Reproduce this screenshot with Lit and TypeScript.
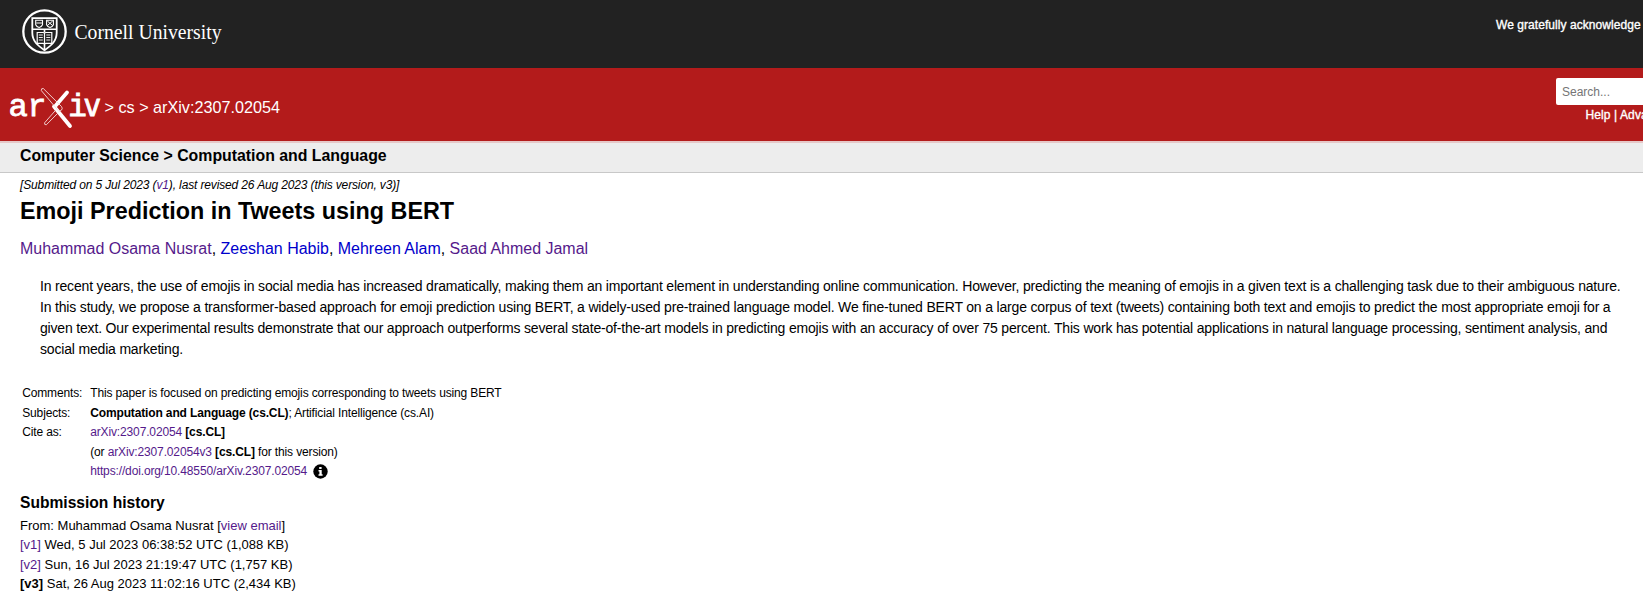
import { LitElement, html, css, svg } from "lit";
import { customElement } from "lit/decorators.js";

const sealMark = svg`
  <g fill="none" stroke="#fff">
    <circle cx="22.5" cy="22.5" r="21.2" stroke-width="2.3"/>
    <path d="M10.3 9.2h24.4v14.6c0 8.5-5.6 12.8-12.2 17.4c-6.6-4.6-12.2-8.9-12.2-17.4z" stroke-width="1.8"/>
    <path d="M10.3 20.3h24.4M22.5 19.5v4M22.5 35v6" stroke-width="1.6"/>
    <path d="M13.7 11.3h6.8v4.5q-1 2.3-3.4 2.7q-2.4-.4-3.4-2.7zM24.6 11.3h6.8v4.5q-1 2.3-3.4 2.7q-2.4-.4-3.4-2.7z" stroke-width="1.1"/>
    <path d="M14.3 14h5.6M25.3 12l5.3 4.5M30.7 12l-5.3 4.5" stroke-width="1"/>
    <path d="M15.2 23.5h6q1.3 0 1.3 1q0-1 1.3-1h6v10.8h-6q-1.3 0-1.3 1q0-1-1.3-1h-6zM22.5 24v11" stroke-width="1.2"/>
    <path d="M16.8 26h4M16.8 28.5h4M16.8 31h4M24.3 26h4M24.3 28.5h4M24.3 31h4" stroke-width=".9"/>
  </g>`;

@customElement("cornell-banner")
class CornellBanner extends LitElement {
  static styles = css`
    :host { display: flex; justify-content: space-between; box-sizing: border-box; height: 68px; padding: 9px 0 0 22px; background: #222; color: #fff; }
    .mark { display: block; }
    .name { font-family: "Liberation Serif", serif; font-size: 21px; }
    .thanks { font-size: 12px; line-height: 14px; padding-top: 9px; width: 147px; white-space: nowrap; letter-spacing: 0.06px; -webkit-text-stroke: 0.35px #fff; }
  `;
  render() {
    return html`
      <svg class="mark" width="230" height="50" viewBox="0 0 230 50">
        ${sealMark}
        <text class="name" x="52.5" y="29.5" fill="#fff" textLength="147" lengthAdjust="spacingAndGlyphs">Cornell University</text>
      </svg>
      <div class="thanks">We gratefully acknowledge</div>`;
  }
}

@customElement("arxiv-header")
class ArxivHeader extends LitElement {
  static styles = css`
    :host { display: flex; justify-content: space-between; box-sizing: border-box; height: 75px; padding-left: 8px; background: #b31b1b; border-bottom: 2px solid #e6c8c8; color: #fff; }
    .crumbs { display: flex; padding-top: 18px; }
    .logo { display: block; flex: none; }
    .mono { font-family: "Liberation Mono", monospace; font-size: 31px; }
    .plain { font-family: "DejaVu Sans Mono", monospace; font-size: 30px; }
    .trail { font-size: 16.2px; line-height: 20px; padding: 11px 0 0 2.5px; white-space: nowrap; }
    .search { width: 87px; padding-top: 10px; overflow: hidden; }
    .field { width: 120px; height: 27px; box-sizing: border-box; border-radius: 2px; background: #fff; color: #757575; font-size: 12px; line-height: 29px; padding-left: 6px; }
    .help { font-size: 12px; line-height: 14px; padding: 3px 0 0 29.5px; white-space: nowrap; letter-spacing: 0.1px; -webkit-text-stroke: 0.35px #fff; }
  `;
  render() {
    return html`
      <div class="crumbs">
        <svg class="logo" width="94" height="44" viewBox="8 86 94 44">
          <g fill="#fff" stroke="#fff" stroke-width=".8">
            <text class="mono" transform="translate(8.6 116.2) scale(1.04 1)">a</text>
            <text class="mono" x="27.8" y="116.2">r</text>
            <text class="mono" x="68.2" y="116.2">i</text>
            <text class="plain" x="83.2" y="116.2">v</text>
          </g>
          <g fill="none" stroke-linecap="round" stroke-linejoin="round">
            <path d="M67 92.5L56 105.2M54 106.5L70 126" stroke="#fff" stroke-width="3.8"/>
            <path d="M41.3 90.2q-.2-2.2 2-1.7L61.5 106.5q1.5 1.8 0 3.6l-2.2 1.2z" stroke="#f6dcdc" stroke-width=".9"/>
            <path d="M55.8 110L44.6 122.8q-.5 2.2 1.7 2L58 113" stroke="#f6dcdc" stroke-width=".9"/>
          </g>
        </svg>
        <div class="trail">&gt; cs &gt; arXiv:2307.02054</div>
      </div>
      <div class="search">
        <div class="field">Search...</div>
        <div class="help">Help | Advanced Search</div>
      </div>`;
  }
}

@customElement("paper-abstract")
class PaperAbstract extends LitElement {
  static styles = css`
    :host { display: block; font-size: 13px; line-height: 19.5px; white-space: nowrap; }
    .subject { box-sizing: border-box; height: 30px; padding: 3px 0 0 20px; background: #ededed; border-bottom: 1px solid #c8c8c8; font-size: 15.85px; line-height: 20px; font-weight: bold; }
    .page { padding-left: 20px; }
    .date { font-size: 12px; letter-spacing: -0.14px; line-height: 14px; padding-top: 5px; font-style: italic; }
    .title { margin: 0; padding-top: 5px; font-size: 23.35px; line-height: 28px; font-weight: bold; }
    .authors { padding-top: 14px; font-size: 15.97px; line-height: 20px; }
    .visited { color: #551a8b; }
    .link { color: #0000cc; }
    .summary { padding: 17px 0 0 20px; font-size: 14px; letter-spacing: -0.178px; line-height: 21px; }
    .meta { display: grid; grid-template-columns: 68px auto; grid-auto-rows: 19.5px; padding: 24px 0 0 2.2px; font-size: 12px; letter-spacing: -0.138px; line-height: 19.5px; }
    .doi { display: flex; align-items: center; }
    .info { margin-left: 6px; }
    .history { margin: 0; padding-top: 11px; font-size: 15.6px; line-height: 20px; font-weight: bold; }
    .versions { padding-top: 3px; }
  `;
  render() {
    return html`
      <div class="subject">Computer Science &gt; Computation and Language</div>
      <div class="page">
        <div class="date">[Submitted on 5 Jul 2023 (<span class="visited">v1</span>), last revised 26 Aug 2023 (this version, v3)]</div>
        <h1 class="title">Emoji Prediction in Tweets using BERT</h1>
        <div class="authors"><span class="visited">Muhammad Osama Nusrat</span>, <span class="link">Zeeshan Habib</span>, <span class="link">Mehreen Alam</span>, <span class="visited">Saad Ahmed Jamal</span></div>
        <div class="summary">
          In recent years, the use of emojis in social media has increased dramatically, making them an important element in understanding online communication. However, predicting the meaning of emojis in a given text is a challenging task due to their ambiguous nature.<br>
          In this study, we propose a transformer-based approach for emoji prediction using BERT, a widely-used pre-trained language model. We fine-tuned BERT on a large corpus of text (tweets) containing both text and emojis to predict the most appropriate emoji for a<br>
          given text. Our experimental results demonstrate that our approach outperforms several state-of-the-art models in predicting emojis with an accuracy of over 75 percent. This work has potential applications in natural language processing, sentiment analysis, and<br>
          social media marketing.
        </div>
        <div class="meta">
          <div>Comments:</div><div>This paper is focused on predicting emojis corresponding to tweets using BERT</div>
          <div>Subjects:</div><div><b>Computation and Language (cs.CL)</b>; Artificial Intelligence (cs.AI)</div>
          <div>Cite as:</div><div><span class="visited">arXiv:2307.02054</span> <b>[cs.CL]</b></div>
          <div></div><div>(or <span class="visited">arXiv:2307.02054v3</span> <b>[cs.CL]</b> for this version)</div>
          <div></div><div class="doi"><span class="visited">https://doi.org/10.48550/arXiv.2307.02054</span><svg class="info" width="15" height="15" viewBox="0 0 15 15"><circle cx="7.5" cy="7.5" r="7.2"/><path fill="#fff" d="M6.2 3h2.4v2H6.2zM5.5 6h3.2v4.2h.9v1.5H5.5v-1.5h.9V7.5h-.9z"/></svg></div>
        </div>
        <h2 class="history">Submission history</h2>
        <div class="versions">
          <div>From: Muhammad Osama Nusrat [<span class="visited">view email</span>]</div>
          <div><span class="visited">[v1]</span> Wed, 5 Jul 2023 06:38:52 UTC (1,088 KB)</div>
          <div><span class="visited">[v2]</span> Sun, 16 Jul 2023 21:19:47 UTC (1,757 KB)</div>
          <div><b>[v3]</b> Sat, 26 Aug 2023 11:02:16 UTC (2,434 KB)</div>
        </div>
      </div>`;
  }
}

@customElement("app-root")
class AppRoot extends LitElement {
  static styles = css`
    :host { display: block; height: 601px; overflow: hidden; background: #fff; color: #000; font-family: "Liberation Sans", Arial, sans-serif; }
  `;
  render() {
    return html`<cornell-banner></cornell-banner><arxiv-header></arxiv-header><paper-abstract></paper-abstract>`;
  }
}
